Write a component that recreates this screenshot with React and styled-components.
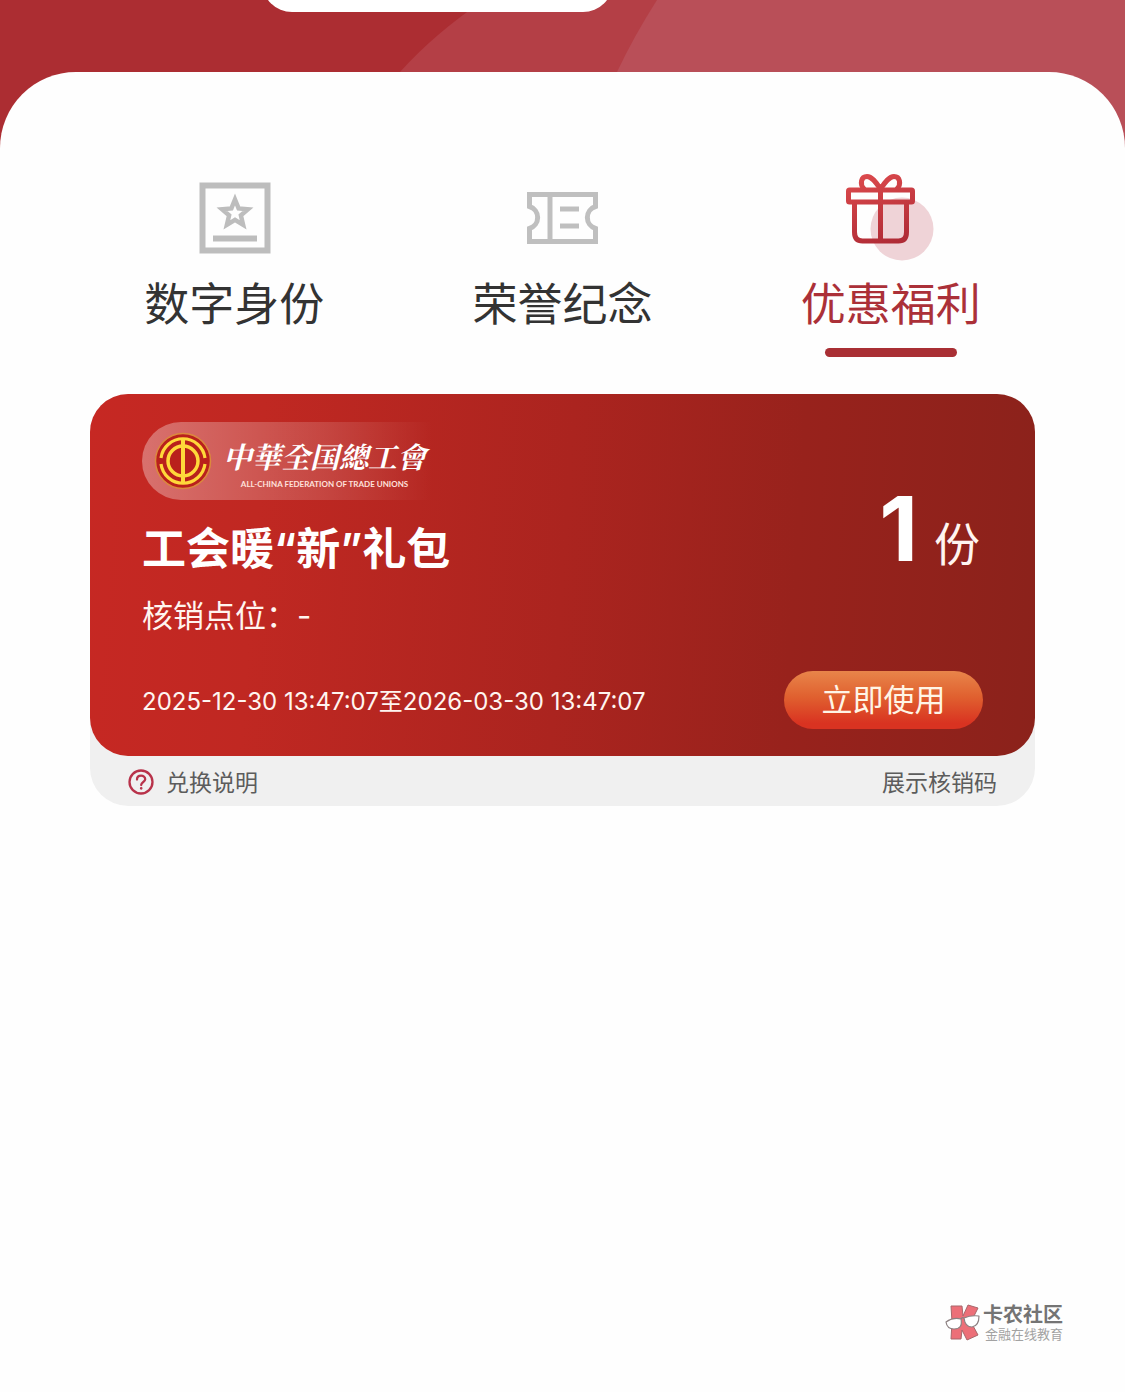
import React, { useState } from "react";
import styled, { createGlobalStyle } from "styled-components";

const GlobalStyle = createGlobalStyle`
  *, *::before, *::after { box-sizing: border-box; }
  body {
    margin: 0;
    background: #fefefe;
    color: #333;
    font-family: Inter, "Noto Sans CJK SC", sans-serif;
  }
  button { font-family: inherit; border: 0; padding: 0; background: none; cursor: pointer; }
  a { color: inherit; text-decoration: none; }
  svg { display: block; }
`;

const Page = styled.div`
  display: flex;
  flex-direction: column;
  min-height: 100vh;
`;

const Hero = styled.header`
  position: relative;
  height: 150px;
  overflow: hidden;
  background: #ac2d32;
`;

const HeroArt = styled.svg`
  position: absolute;
  inset: 0;
  width: 100%;
  height: 100%;
`;

const HeroPanel = styled.div`
  position: relative;
  width: 351px;
  max-width: 60%;
  height: 72px;
  margin: -60px 0 0 262px;
  border-radius: 30px;
  background: #fff;
`;

const Sheet = styled.main`
  position: relative;
  flex: 1;
  display: flex;
  flex-direction: column;
  margin-top: -78px;
  padding: 100px 0 50px;
  border-radius: 76px 76px 0 0;
  background: #fefefe;
`;

const Tabs = styled.nav`
  display: grid;
  grid-template-columns: repeat(3, 1fr);
  padding: 0 70px;
`;

const Tab = styled.button`
  display: flex;
  flex-direction: column;
  align-items: center;
  gap: 16px;
  font-size: 45px;
  line-height: 54px;
  font-weight: 400;
  color: ${(p) => (p.$active ? "#ab3038" : "#333")};

  &::after {
    content: "";
    width: 132px;
    height: 9px;
    border-radius: 5px;
    background: ${(p) => (p.$active ? "#a92f34" : "transparent")};
  }
`;

const Voucher = styled.article`
  margin: 37px 90px 0;
  border-radius: 38px;
  background: #f0f0f0;
`;

const VoucherBody = styled.div`
  display: flex;
  flex-direction: column;
  gap: 37px;
  padding: 28px 52px 27px;
  border-radius: 38px;
  background: linear-gradient(94deg, #c62823 0%, #c02822 18%, #ab241f 50%, #98221c 74%, #8b221b 100%);
  color: #fff5f0;
`;

const Row = styled.div`
  display: flex;
  align-items: center;
  justify-content: space-between;
`;

const Details = styled.div`
  display: flex;
  flex-direction: column;
  gap: 22px;
`;

const Brand = styled.div`
  display: flex;
  align-items: center;
  gap: 11px;
  width: 306px;
  height: 78px;
  padding-left: 12px;
  border-radius: 39px 0 0 39px;
  background: linear-gradient(90deg, rgba(255, 255, 255, 0.34), rgba(255, 255, 255, 0.14) 60%, rgba(255, 255, 255, 0) 95%);
`;

const BrandText = styled.div`
  display: flex;
  flex-direction: column;
  align-items: center;
  white-space: nowrap;
`;

const BrandName = styled.span`
  font: italic 700 29px/46px "Noto Serif CJK SC", "Noto Sans CJK SC", serif;
  color: #fff;
`;

const BrandLatin = styled.span`
  font: 700 8px/10px Lato, sans-serif;
  color: #ffe1dc;
`;

const Title = styled.h1`
  margin: 0;
  font-size: 44px;
  line-height: 54px;
  font-weight: 600;
  color: #fff;
`;

const Place = styled.p`
  margin: 0;
  font-size: 31px;
  line-height: 36px;
`;

const Count = styled.div`
  display: flex;
  align-items: baseline;
  gap: 16px;
  padding: 16px 3px 0 0;
  font-size: 46px;
  line-height: 90px;
`;

const CountNumber = styled.strong`
  font-size: 90px;
  font-weight: 700;
  color: #fff;
`;

const Period = styled.time`
  padding-top: 3px;
  font-size: 24px;
  line-height: 36px;
`;

const UseButton = styled.button`
  width: 199px;
  height: 58px;
  border-radius: 29px;
  background: linear-gradient(180deg, #e8854a 0%, #e0602f 45%, #d93321 90%);
  font-size: 31px;
  line-height: 58px;
  color: #fff5e6;
`;

const VoucherFooter = styled.footer`
  display: flex;
  align-items: center;
  justify-content: space-between;
  height: 50px;
  padding: 4px 38px 0;
`;

const FooterLink = styled.a`
  display: flex;
  align-items: center;
  gap: 12px;
  font-size: 23px;
  line-height: 36px;
  color: #5c5c5c;
`;

const Community = styled.aside`
  display: flex;
  align-items: center;
  align-self: flex-end;
  gap: 2px;
  margin: auto 62px 0 0;
`;

const CommunityText = styled.div`
  display: flex;
  flex-direction: column;
`;

const CommunityName = styled.strong`
  font-size: 20px;
  line-height: 22px;
  font-weight: 700;
  color: #747474;
`;

const CommunityNote = styled.span`
  padding-left: 2px;
  font-size: 13px;
  line-height: 16px;
  color: #a2a2a2;
`;

function IdentityIcon() {
  return (
    <svg width="90" height="90" viewBox="-1 0 90 90" fill="none" stroke="#bdbdbd">
      <rect x="12.5" y="13.5" width="65" height="65" strokeWidth="6" />
      <path
        d="M45 27.5 L48.6 36.4 L58 37.2 L50.9 43.4 L53.1 52.8 L45 47.8 L36.9 52.8 L39.1 43.4 L32 37.2 L41.4 36.4 Z"
        strokeWidth="4.5"
      />
      <path d="M23 66.500h44" strokeWidth="6" />
    </svg>
  );
}

function HonorIcon() {
  return (
    <svg width="90" height="90" viewBox="-1 0 90 90" fill="none" stroke="#bfbfbf" strokeWidth="5">
      <path d="M11.500 22.500H77.500V34.500A11.500 11.500 0 0 0 77.500 56.500V69.500H11.500V56.500A11.500 11.500 0 0 0 11.500 34.500Z" />
      <path d="M32 22v48M42 37h19M42 54h19" />
    </svg>
  );
}

function GiftIcon() {
  return (
    <svg width="90" height="90" viewBox="1 0 90 90" fill="none">
      <defs>
        <linearGradient id="gift" gradientUnits="userSpaceOnUse" x1="20" y1="0" x2="45" y2="75">
          <stop offset="0" stopColor="#dc4a4d" />
          <stop offset="1" stopColor="#ae2a35" />
        </linearGradient>
      </defs>
      <circle cx="57" cy="57" r="31.500" fill="#efd3d7" />
      <g stroke="url(#gift)" strokeWidth="5" strokeLinejoin="round" strokeLinecap="round">
        <rect x="3.500" y="18" width="64" height="12" rx="1" />
        <path d="M9.500 31V60Q9.500 69 17.500 69H53.500Q61.500 69 61.500 60V31" />
        <path d="M35.500 17C31 10.500 27 4.500 22 4.500C16 4.500 14.500 12 19 17M35.500 17C40 10.500 44 4.500 49 4.500C55 4.500 56.500 12 52 17" />
        <path d="M35.500 17V68" />
      </g>
    </svg>
  );
}

function UnionEmblem() {
  return (
    <svg width="58" height="58" viewBox="0 0 58 58" fill="none">
      <circle cx="29" cy="29" r="27.500" fill="#b9201c" stroke="#dc8a3c" strokeWidth="1.500" />
      <g stroke="#ffd83a" strokeWidth="3.200">
        <path d="M7 26A22.200 22.200 0 0 1 51 26M7 32A22.200 22.200 0 0 0 51 32" />
        <circle cx="29" cy="29" r="15" strokeWidth="3.500" />
        <path d="M29 8V50" strokeWidth="4" />
      </g>
    </svg>
  );
}

function HelpIcon() {
  return (
    <svg width="26" height="26" viewBox="0 1 26 26" fill="none" stroke="#b8324a" strokeLinecap="round" overflow="visible">
      <circle cx="13" cy="13" r="11.500" strokeWidth="2.300" />
      <path d="M9 10.500C9 5.300 17.200 5.500 17.200 10.300C17.200 13 13.200 13 13.200 16" strokeWidth="2.300" />
      <circle cx="13.200" cy="19.300" r="0.600" strokeWidth="1.500" />
    </svg>
  );
}

function CommunityLogo() {
  return (
    <svg width="36" height="38" viewBox="0 0 36 38" strokeLinejoin="round">
      <g fill="#ec6f78" stroke="#a7676b" strokeWidth="1">
        <path d="M6 2H17L18 12L23 1L33 4L26 18L33 31L22 36L17 26L16 35H6L7 18Z" />
      </g>
      <g fill="#fff" stroke="#8c8082" strokeWidth="1.200">
        <path d="M1 18Q8 13 16 15Q18 25 9 25Q2 25 1 18Z" />
        <path d="M19 14Q26 11 34 12Q34 22 27 23Q20 23 19 14Z" />
        <path d="M16 15Q17 13 19 14" fill="none" />
      </g>
    </svg>
  );
}

const tabs = [
  { id: "identity", label: "数字身份", Icon: IdentityIcon },
  { id: "honor", label: "荣誉纪念", Icon: HonorIcon },
  { id: "benefit", label: "优惠福利", Icon: GiftIcon },
];

export default function App() {
  const [active, setActive] = useState("benefit");

  return (
    <Page>
      <GlobalStyle />
      <Hero>
        <HeroArt viewBox="0 0 1125 150" preserveAspectRatio="none" aria-hidden="true">
          <path d="M484 0Q434 34 400 72L350 150H1125V0Z" fill="#b43f46" />
          <path d="M657 0Q634 36 617 72L590 150H1125V0Z" fill="#b94f58" />
        </HeroArt>
        <HeroPanel />
      </Hero>
      <Sheet>
        <Tabs>
          {tabs.map(({ id, label, Icon }) => (
            <Tab
              key={id}
              type="button"
              $active={id === active}
              aria-current={id === active ? "page" : undefined}
              onClick={() => setActive(id)}
            >
              <Icon />
              {label}
            </Tab>
          ))}
        </Tabs>

        <Voucher>
          <VoucherBody>
            <Row>
              <Details>
                <Brand>
                  <UnionEmblem />
                  <BrandText>
                    <BrandName lang="zh-Hant">中華全国總工會</BrandName>
                    <BrandLatin>ALL-CHINA FEDERATION OF TRADE UNIONS</BrandLatin>
                  </BrandText>
                </Brand>
                <Title>工会暖“新”礼包</Title>
                <Place>核销点位：-</Place>
              </Details>
              <Count>
                <CountNumber>1</CountNumber>份
              </Count>
            </Row>
            <Row>
              <Period>2025-12-30 13:47:07至2026-03-30 13:47:07</Period>
              <UseButton type="button">立即使用</UseButton>
            </Row>
          </VoucherBody>
          <VoucherFooter>
            <FooterLink href="#instructions">
              <HelpIcon />
              兑换说明
            </FooterLink>
            <FooterLink href="#code">展示核销码</FooterLink>
          </VoucherFooter>
        </Voucher>

        <Community>
          <CommunityLogo />
          <CommunityText>
            <CommunityName>卡农社区</CommunityName>
            <CommunityNote>金融在线教育</CommunityNote>
          </CommunityText>
        </Community>
      </Sheet>
    </Page>
  );
}
